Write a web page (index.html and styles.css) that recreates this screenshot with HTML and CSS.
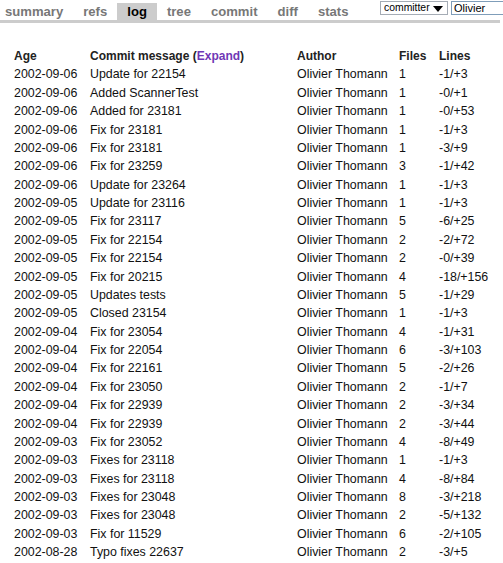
FILE: index.html
```html
<!DOCTYPE html>
<html>
<head>
<meta charset="utf-8">
<link rel="stylesheet" href="styles.css">
</head>
<body>
<div class="topbar">
  <nav class="tabs">
    <a class="tab">summary</a>
    <a class="tab">refs</a>
    <a class="tab active">log</a>
    <a class="tab">tree</a>
    <a class="tab">commit</a>
    <a class="tab">diff</a>
    <a class="tab">stats</a>
  </nav>
  <form class="search">
    <span class="selectwrap"><select class="sel"><option>committer</option></select></span>
    <input class="query" type="text" value="Olivier">
  </form>
</div>
<table class="list">
  <colgroup><col class="c-age"><col class="c-msg"><col class="c-author"><col class="c-files"><col class="c-lines"></colgroup>
  <thead>
    <tr><th>Age</th><th>Commit message (<a class="expand">Expand</a>)</th><th>Author</th><th>Files</th><th>Lines</th></tr>
  </thead>
  <tbody>
    <tr><td>2002-09-06</td><td>Update for 22154</td><td>Olivier Thomann</td><td>1</td><td>-1/+3</td></tr>
    <tr><td>2002-09-06</td><td>Added ScannerTest</td><td>Olivier Thomann</td><td>1</td><td>-0/+1</td></tr>
    <tr><td>2002-09-06</td><td>Added for 23181</td><td>Olivier Thomann</td><td>1</td><td>-0/+53</td></tr>
    <tr><td>2002-09-06</td><td>Fix for 23181</td><td>Olivier Thomann</td><td>1</td><td>-1/+3</td></tr>
    <tr><td>2002-09-06</td><td>Fix for 23181</td><td>Olivier Thomann</td><td>1</td><td>-3/+9</td></tr>
    <tr><td>2002-09-06</td><td>Fix for 23259</td><td>Olivier Thomann</td><td>3</td><td>-1/+42</td></tr>
    <tr><td>2002-09-06</td><td>Update for 23264</td><td>Olivier Thomann</td><td>1</td><td>-1/+3</td></tr>
    <tr><td>2002-09-05</td><td>Update for 23116</td><td>Olivier Thomann</td><td>1</td><td>-1/+3</td></tr>
    <tr><td>2002-09-05</td><td>Fix for 23117</td><td>Olivier Thomann</td><td>5</td><td>-6/+25</td></tr>
    <tr><td>2002-09-05</td><td>Fix for 22154</td><td>Olivier Thomann</td><td>2</td><td>-2/+72</td></tr>
    <tr><td>2002-09-05</td><td>Fix for 22154</td><td>Olivier Thomann</td><td>2</td><td>-0/+39</td></tr>
    <tr><td>2002-09-05</td><td>Fix for 20215</td><td>Olivier Thomann</td><td>4</td><td>-18/+156</td></tr>
    <tr><td>2002-09-05</td><td>Updates tests</td><td>Olivier Thomann</td><td>5</td><td>-1/+29</td></tr>
    <tr><td>2002-09-05</td><td>Closed 23154</td><td>Olivier Thomann</td><td>1</td><td>-1/+3</td></tr>
    <tr><td>2002-09-04</td><td>Fix for 23054</td><td>Olivier Thomann</td><td>4</td><td>-1/+31</td></tr>
    <tr><td>2002-09-04</td><td>Fix for 22054</td><td>Olivier Thomann</td><td>6</td><td>-3/+103</td></tr>
    <tr><td>2002-09-04</td><td>Fix for 22161</td><td>Olivier Thomann</td><td>5</td><td>-2/+26</td></tr>
    <tr><td>2002-09-04</td><td>Fix for 23050</td><td>Olivier Thomann</td><td>2</td><td>-1/+7</td></tr>
    <tr><td>2002-09-04</td><td>Fix for 22939</td><td>Olivier Thomann</td><td>2</td><td>-3/+34</td></tr>
    <tr><td>2002-09-04</td><td>Fix for 22939</td><td>Olivier Thomann</td><td>2</td><td>-3/+44</td></tr>
    <tr><td>2002-09-03</td><td>Fix for 23052</td><td>Olivier Thomann</td><td>4</td><td>-8/+49</td></tr>
    <tr><td>2002-09-03</td><td>Fixes for 23118</td><td>Olivier Thomann</td><td>1</td><td>-1/+3</td></tr>
    <tr><td>2002-09-03</td><td>Fixes for 23118</td><td>Olivier Thomann</td><td>4</td><td>-8/+84</td></tr>
    <tr><td>2002-09-03</td><td>Fixes for 23048</td><td>Olivier Thomann</td><td>8</td><td>-3/+218</td></tr>
    <tr><td>2002-09-03</td><td>Fixes for 23048</td><td>Olivier Thomann</td><td>2</td><td>-5/+132</td></tr>
    <tr><td>2002-09-03</td><td>Fix for 11529</td><td>Olivier Thomann</td><td>6</td><td>-2/+105</td></tr>
    <tr><td>2002-08-28</td><td>Typo fixes 22637</td><td>Olivier Thomann</td><td>2</td><td>-3/+5</td></tr>
  </tbody>
</table>
</body>
</html>
```
FILE: styles.css
```css
html, body {
  margin: 0;
  padding: 0;
  background: #fff;
  overflow: hidden;
}
body {
  font-family: "Liberation Sans", Arial, sans-serif;
  font-size: 12px;
  color: #111;
}
.topbar {
  display: flex;
  align-items: flex-end;
  justify-content: space-between;
  border-bottom: 3px solid #ccc;
  margin-right: 3px;
  height: 20px;
}
.tabs {
  display: flex;
  align-items: flex-end;
  flex-shrink: 0;
}
.tab {
  display: block;
  padding: 0 10px;
  height: 17px;
  line-height: 17px;
  font-size: 13.1px;
  font-weight: bold;
  color: #777;
}
.tab:first-child {
  padding-left: 5px;
}
.tab.active {
  color: #000;
  background: #ccc;
}
.search {
  display: flex;
  align-self: flex-start;
  flex-shrink: 0;
  gap: 3px;
  margin: 1px -23px 0 0;
}
.selectwrap {
  position: relative;
  display: block;
  flex-shrink: 0;
}
.selectwrap::after {
  content: "";
  position: absolute;
  right: 5px;
  top: 5px;
  border-left: 5px solid transparent;
  border-right: 5px solid transparent;
  border-top: 6px solid #000;
  pointer-events: none;
}
.sel {
  appearance: none;
  -webkit-appearance: none;
  display: block;
  width: 68px;
  height: 14px;
  margin: 0;
  padding: 0 0 0 3px;
  border: 1px solid #a5acb5;
  border-radius: 0;
  background: #fff;
  font-family: "Liberation Sans", Arial, sans-serif;
  font-size: 10.4px;
  line-height: 12px;
  color: #000;
}
.query {
  display: block;
  flex-shrink: 0;
  width: 72px;
  height: 14px;
  margin: 0;
  padding: 0 2px;
  box-sizing: border-box;
  border: 1px solid #7f9db9;
  font-family: "Liberation Sans", Arial, sans-serif;
  font-size: 11px;
  color: #000;
}
.list {
  border-collapse: collapse;
  table-layout: fixed;
  margin: 24px 0 0 7px;
  width: 496px;
}
.c-age { width: 76px; }
.c-msg { width: 207px; }
.c-author { width: 102px; }
.c-files { width: 40px; }
.list th, .list td {
  padding: 0 0 0 7px;
  text-align: left;
  white-space: nowrap;
  height: 18.38px;
  line-height: 18.38px;
}
.list th {
  font-size: 12px;
  font-weight: bold;
  color: #222;
}
.list td {
  font-size: 12.4px;
  color: #111;
}
.expand {
  color: #6f37b5;
}
```
